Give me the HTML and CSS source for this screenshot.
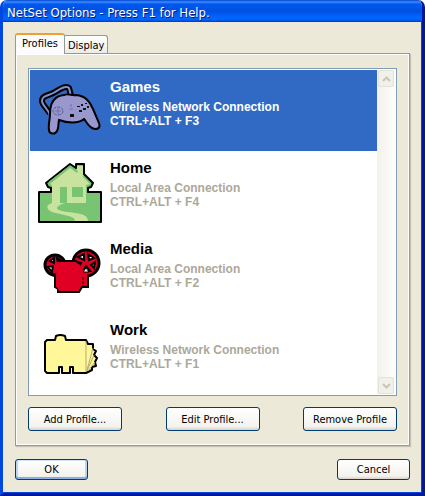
FILE: index.html
```html
<!DOCTYPE html>
<html lang="en">
<head>
  <meta charset="UTF-8" />
  <meta name="viewport" content="width=device-width, initial-scale=1.0" />
  <title>NetSet Options</title>
  <link rel="stylesheet" href="styles.css">
</head>
<body>
  <form class="window">
    <h1 class="title-bar">NetSet Options - Press F1 for Help.</h1>
    <div class="content">
      <div class="tabs" role="tablist">
        <button type="button" class="tab active" role="tab" aria-selected="true">Profiles</button>
        <button type="button" class="tab" role="tab" aria-selected="false">Display</button>
      </div>

      <div class="panel" role="tabpanel">
        <div class="list-box">
          <ul class="profiles" role="listbox" aria-label="Profiles">
            <li class="profile selected" role="option" aria-selected="true">
              <svg class="icon" viewBox="0 0 64 64" aria-hidden="true">
                <path d="M12 36 C10 31 4 27 4 23 C4 17 11 18 17 14 C22 11 28 7 31 10 L33 17" fill="none" stroke="#000" stroke-width="6"/>
                <path d="M12 37 C10 31 4 27 4 23 C4 17 11 18 17 14 C22 11 28 7 31 10 L33 18" fill="none" stroke="#8490cb" stroke-width="2"/>
                <path d="M12 36 C12 26 16 18 26 17 C30 15 34 18 38 17 C48 18 52 24 55 31 L61 45 C63 51 58 52 54 50 C50 48 48 43 46 41 C40 46 29 45 21 42 C20 46 21 50 19 53 C17 57 11 56 11 52 C10 47 12 42 12 36 Z" fill="#9998ce" stroke="#000" stroke-width="2"/>
                <ellipse cx="20" cy="33" rx="5" ry="4" fill="none" stroke="#55558c" stroke-dasharray="3 1"/>
                <path d="M17 33h6M20 30v6M33 26v3M31 31h4" stroke="#6e6ea6"/>
                <path d="M32 36h4v3h-4zM39 28h3v1h-3zM43 26h2v2h-2zM47 25h2v1h-2zM41 32h3v2h-3zM45 30h3v2h-3zM49 28h2v2h-2z" fill="#111"/>
              </svg>
              <div class="info">
                <h2>Games</h2>
                <p>Wireless Network Connection</p>
                <p>CTRL+ALT + F3</p>
              </div>
            </li>
            <li class="profile" role="option" aria-selected="false">
              <svg class="icon" viewBox="0 0 64 64" aria-hidden="true">
                <path d="M1 33 H13 V29 L10 28 L8 24 L32 5 L38 9 V5 H46 V15 L55 24 L53 28 L50 29 V33 H63 V63 H1 Z" fill="#79c473" stroke="#000" stroke-width="2" stroke-linejoin="round"/>
                <path d="M12 25 L32 9 L39 14 V7 H45 V18 L52 25 L48 26 V44 H14 V26 Z" fill="#c8e39e"/>
                <path d="M11 23 L32 7 L40 13" fill="none" stroke="#79c473"/>
                <path d="M22 28h7v16h-7zM34 28h11v10h-11z" fill="#79c473"/>
                <path d="M14 44 H27 C21 46 16 49 21 51 C31 55 50 52 50 62 H37 C38 55 13 56 10 50 C8 47 11 45 14 44 Z" fill="#c8e39e"/>
              </svg>
              <div class="info">
                <h2>Home</h2>
                <p>Local Area Connection</p>
                <p>CTRL+ALT + F4</p>
              </div>
            </li>
            <li class="profile" role="option" aria-selected="false">
              <svg class="icon" viewBox="0 0 64 64" aria-hidden="true">
                <path d="M40 30 H50 V47 H44 L41 52 H20 V49 L17 47 V37 L15 34 L18 22 H38 Z" fill="#df0024" stroke="#000" stroke-width="2"/>
                <circle cx="17" cy="25" r="10" fill="#df0024" stroke="#000" stroke-width="3"/>
                <circle cx="48" cy="23" r="13" fill="#df0024" stroke="#000" stroke-width="3"/>
                <g fill="#fff" stroke="#000" stroke-width="2">
                  <path d="M12 21l4-3v5zM19 18l5 3-4 2zM10 27l5-1-1 6z"/>
                  <path d="M40 17l6-3v6zM50 14l6 4-5 2zM38 22l5 1-3 6zM57 22l-1 6-3-3zM45 31l3-5 4 5z"/>
                </g>
                <path d="M19 21 H37 L42 24 L44 30 H49 V46 H43 L40 51 H21 L18 46 V36 Z" fill="#df0024"/>
                <path d="M19 21 H38 L42 24" fill="none" stroke="#000" stroke-width="2"/>
                <path d="M45 37v10" stroke="#000" stroke-dasharray="3 1"/>
                <path d="M45 32l3-4 3 4z" fill="#fff" stroke="#000"/>
              </svg>
              <div class="info">
                <h2>Media</h2>
                <p>Local Area Connection</p>
                <p>CTRL+ALT + F2</p>
              </div>
            </li>
            <li class="profile" role="option" aria-selected="false">
              <svg class="icon" viewBox="0 0 64 64" aria-hidden="true">
                <path d="M9 19 H17 L18 15 Q22 13 27 15 L28 19 H48 L50 23 H55 V28 L58 30 L56 34 L59 37 L57 41 L58 45 L54 46 V49 L48 52 H35 V46 H32 V52 H24 V46 H21 V52 H9 L7 50 V21 Z" fill="#fff799" stroke="#000" stroke-width="2" stroke-linejoin="round"/>
                <path d="M48 20v31M49 49l6-22M49 50l7-16M50 50l7-9" fill="none" stroke="#b3ad70"/>
              </svg>
              <div class="info">
                <h2>Work</h2>
                <p>Wireless Network Connection</p>
                <p>CTRL+ALT + F1</p>
              </div>
            </li>
          </ul>
          <div class="scrollbar">
            <button type="button" aria-label="Scroll up" disabled>
              <svg viewBox="0 0 9 6" aria-hidden="true"><path d="M1 5l3.500-3.500L8 5"/></svg>
            </button>
            <button type="button" aria-label="Scroll down" disabled>
              <svg viewBox="0 0 9 6" aria-hidden="true"><path d="M1 1l3.500 3.500L8 1"/></svg>
            </button>
          </div>
        </div>

        <div class="actions">
          <button type="button" class="btn">Add Profile...</button>
          <button type="button" class="btn">Edit Profile...</button>
          <button type="button" class="btn">Remove Profile</button>
        </div>
      </div>

      <div class="footer">
        <button type="submit" class="btn small default">OK</button>
        <button type="button" class="btn small">Cancel</button>
      </div>
    </div>
  </form>
</body>
</html>
```
FILE: styles.css
```css
* {
  box-sizing: border-box;
}
body {
  margin: 0;
  background: #fff;
  font-family: "DejaVu Sans Condensed", Tahoma, sans-serif;
  font-size: 11px;
  color: #000;
}
button {
  font: inherit;
  color: inherit;
}
.window {
  display: flex;
  flex-direction: column;
  min-height: 100vh;
  border: 3px solid #0046e0;
  border-top: none;
  border-right-color: #00189c;
  border-bottom-color: #00189c;
  border-radius: 7px 7px 0 0;
  background: #ece9d8;
  overflow: hidden;
}
.title-bar {
  margin: 0 -3px;
  padding: 4px 7px 0;
  height: 22px;
  font-size: 13px;
  font-weight: normal;
  line-height: 18px;
  color: #fff;
  text-shadow: 1px 1px #0a1883;
  background: linear-gradient(#0045d0, #3c8cff 2px, #0058ee 4px, #0050e0 11px, #0066ff 17px, #0060f8 20px, #0038c0 22px);
}
.content {
  flex: 1;
  padding: 11px 12px 13px;
  box-shadow: inset -1px -1px #0046e0;
}

/* tabs */
.tabs {
  display: flex;
  align-items: flex-end;
  height: 20px;
}
.tab {
  height: 18px;
  padding: 1px 3px 0;
  border: 1px solid #919b9c;
  border-left: none;
  border-bottom: none;
  border-radius: 0 3px 0 0;
  background: linear-gradient(#fff, #ecebe6);
}
.tab.active {
  position: relative;
  height: 21px;
  margin-bottom: -1px;
  padding: 0 6px 2px;
  border-left: 1px solid #919b9c;
  border-top: 2px solid #f0a030;
  border-radius: 3px 3px 0 0;
  background: #fcfcfe;
}
.panel {
  padding: 14px 12px;
  border: 1px solid #919b9c;
  box-shadow: inset 0 0 0 1px #fff, 1px 1px 1px #c8c5b2;
}

/* profile list */
.list-box {
  display: flex;
  padding: 1px;
  border: 1px solid #7f9db9;
  background: #fff;
}
.profiles {
  flex: 1;
  margin: 0;
  padding: 0;
  list-style: none;
}
.profile {
  display: flex;
  gap: 8px;
  height: 81px;
  padding: 8px;
  font-family: "Liberation Sans", Arial, sans-serif;
  font-weight: bold;
  color: #aca899;
}
.profile.selected,
.profile.selected h2 {
  background: #316ac5;
  color: #fff;
}
.icon {
  flex: none;
  width: 64px;
  height: 64px;
}
.info h2 {
  margin: 0 0 5px;
  font-size: 15px;
  line-height: 17px;
  color: #000;
}
.info p {
  margin: 0;
  font-size: 12px;
  line-height: 14px;
}
.scrollbar {
  display: flex;
  flex-direction: column;
  justify-content: space-between;
  width: 18px;
  background: linear-gradient(90deg, #f3f1ec, #fefefb);
}
.scrollbar button {
  display: flex;
  align-items: center;
  justify-content: center;
  width: 16px;
  height: 17px;
  margin-left: 1px;
  padding: 0;
  border: 1px solid #e4e2d6;
  border-radius: 2px;
  background: #f1f0e9;
}
.scrollbar svg {
  width: 9px;
  height: 6px;
  fill: none;
  stroke: #c9c7ba;
  stroke-width: 2;
}

/* buttons */
.btn {
  flex: none;
  width: 94px;
  height: 24px;
  padding: 0;
  border: 1px solid #003c74;
  border-radius: 3px;
  background: linear-gradient(#fff, #f3f2ed 85%, #d8d1c5);
}
.btn.small {
  width: 73px;
  height: 21px;
}
.btn.default {
  box-shadow: inset 0 1px #cee7ff, inset 0 -2px #89ade4, inset 2px 0 #bcd4f6, inset -2px 0 #bcd4f6;
}
.actions {
  display: flex;
  justify-content: space-between;
  margin-top: 11px;
}
.footer {
  display: flex;
  justify-content: space-between;
  margin-top: 13px;
}
```
